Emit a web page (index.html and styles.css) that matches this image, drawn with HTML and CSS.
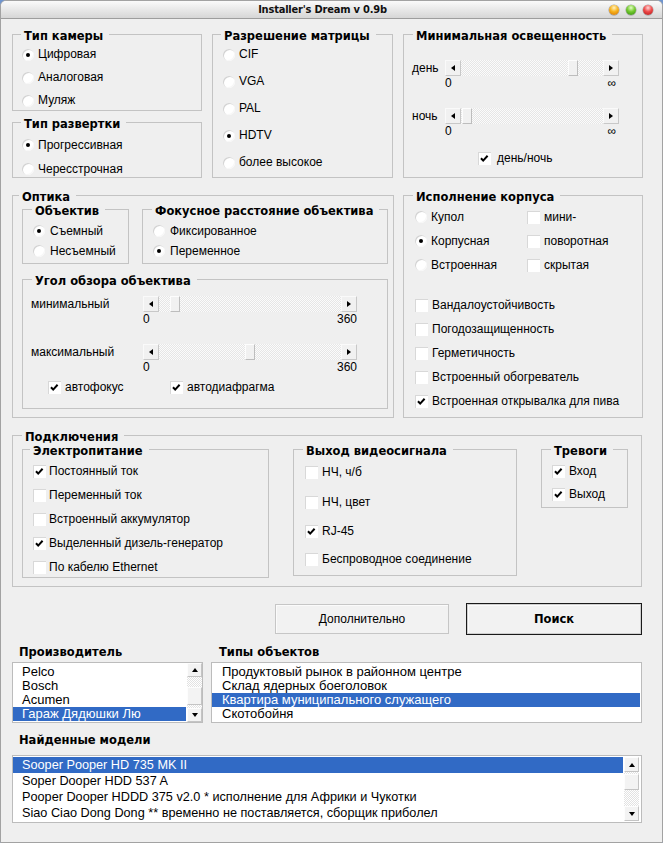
FILE: index.html
```html
<!DOCTYPE html>
<html lang="ru">
<head>
<meta charset="utf-8">
<title>Installer's Dream v 0.9b</title>
<link rel="stylesheet" href="styles.css">
</head>
<body>
<div class="window">
  <div class="titlebar">
    <div class="title">Installer's Dream v 0.9b</div>
    <div class="lights"><span class="lamp orange"></span><span class="lamp green"></span><span class="lamp red"></span></div>
  </div>
  <div class="content">
    <div class="row1">
      <div class="stack">
        <div class="group g-camtype">
          <div class="legend">Тип камеры</div>
          <div class="opt h23"><span class="radio on"></span>Цифровая</div>
          <div class="opt h23"><span class="radio"></span>Аналоговая</div>
          <div class="opt h23"><span class="radio"></span>Муляж</div>
        </div>
        <div class="group g-scan">
          <div class="legend">Тип развертки</div>
          <div class="items-scan">
            <div class="opt h24"><span class="radio on"></span>Прогрессивная</div>
            <div class="opt h24"><span class="radio"></span>Чересстрочная</div>
          </div>
        </div>
      </div>
      <div class="group g-res">
        <div class="legend">Разрешение матрицы</div>
        <div class="items-res">
          <div class="opt h27"><span class="radio"></span>CIF</div>
          <div class="opt h27"><span class="radio"></span>VGA</div>
          <div class="opt h27"><span class="radio"></span>PAL</div>
          <div class="opt h27"><span class="radio on"></span>HDTV</div>
          <div class="opt h27"><span class="radio"></span>более высокое</div>
        </div>
      </div>
      <div class="group g-light">
        <div class="legend">Минимальная освещенность</div>
        <div class="light-body">
          <div class="srow">
            <span class="slabel s-short">день</span>
            <div class="slider s-light"><span class="sbtn left"></span><div class="track"><span class="thumb" style="margin-left:107px"></span></div><span class="sbtn right"></span></div>
          </div>
          <div class="vals v-short v-light"><span>0</span><span>∞</span></div>
          <div class="srow gap-srow">
            <span class="slabel s-short">ночь</span>
            <div class="slider s-light"><span class="sbtn left"></span><div class="track"><span class="thumb" style="margin-left:1px"></span></div><span class="sbtn right"></span></div>
          </div>
          <div class="vals v-short v-light"><span>0</span><span>∞</span></div>
          <div class="opt dn"><span class="check on"><svg viewBox="0 0 13 13"><path d="M3 6.2 L5.2 8.6 L9.6 3.8"/></svg></span>день/ночь</div>
        </div>
      </div>
    </div>

    <div class="row2">
      <div class="group g-optics">
        <div class="legend">Оптика</div>
        <div class="lens-row">
          <div class="group g-lens">
            <div class="legend">Объектив</div>
            <div class="items-lens">
              <div class="opt h20 wide-gap"><span class="radio on"></span>Съемный</div>
              <div class="opt h20 wide-gap"><span class="radio"></span>Несъемный</div>
            </div>
          </div>
          <div class="group g-focal">
            <div class="legend">Фокусное расстояние объектива</div>
            <div class="items-lens">
              <div class="opt h20 wide-gap"><span class="radio"></span>Фиксированное</div>
              <div class="opt h20 wide-gap"><span class="radio on"></span>Переменное</div>
            </div>
          </div>
        </div>
        <div class="group g-angle">
          <div class="legend">Угол обзора объектива</div>
          <div class="angle-body">
            <div class="srow">
              <span class="slabel s-long">минимальный</span>
              <div class="slider s-angle"><span class="sbtn left"></span><div class="track"><span class="thumb" style="margin-left:11px"></span></div><span class="sbtn right"></span></div>
            </div>
            <div class="vals v-long v-angle"><span>0</span><span>360</span></div>
            <div class="srow gap-srow">
              <span class="slabel s-long">максимальный</span>
              <div class="slider s-angle"><span class="sbtn left"></span><div class="track"><span class="thumb" style="margin-left:86px"></span></div><span class="sbtn right"></span></div>
            </div>
            <div class="vals v-long v-angle"><span>0</span><span>360</span></div>
            <div class="angle-checks">
              <div class="opt h16 af"><span class="check on"><svg viewBox="0 0 13 13"><path d="M3 6.2 L5.2 8.6 L9.6 3.8"/></svg></span>автофокус</div>
              <div class="opt h16"><span class="check on"><svg viewBox="0 0 13 13"><path d="M3 6.2 L5.2 8.6 L9.6 3.8"/></svg></span>автодиафрагма</div>
            </div>
          </div>
        </div>
      </div>

      <div class="group g-body">
        <div class="legend">Исполнение корпуса</div>
        <div class="body-grid">
          <div class="opt h24"><span class="radio"></span>Купол</div>
          <div class="opt h24"><span class="check"></span>мини-</div>
          <div class="opt h24"><span class="radio on"></span>Корпусная</div>
          <div class="opt h24"><span class="check"></span>поворотная</div>
          <div class="opt h24"><span class="radio"></span>Встроенная</div>
          <div class="opt h24"><span class="check"></span>скрытая</div>
        </div>
        <div class="body-list">
          <div class="opt h24"><span class="check"></span>Вандалоустойчивость</div>
          <div class="opt h24"><span class="check"></span>Погодозащищенность</div>
          <div class="opt h24"><span class="check"></span>Герметичность</div>
          <div class="opt h24"><span class="check"></span>Встроенный обогреватель</div>
          <div class="opt h24"><span class="check on"><svg viewBox="0 0 13 13"><path d="M3 6.2 L5.2 8.6 L9.6 3.8"/></svg></span>Встроенная открывалка для пива</div>
        </div>
      </div>
    </div>

    <div class="group g-conn">
      <div class="legend">Подключения</div>
      <div class="conn-row">
        <div class="group g-power">
          <div class="legend">Электропитание</div>
          <div class="items-power">
            <div class="opt h24 tight"><span class="check on"><svg viewBox="0 0 13 13"><path d="M3 6.2 L5.2 8.6 L9.6 3.8"/></svg></span>Постоянный ток</div>
            <div class="opt h24 tight"><span class="check"></span>Переменный ток</div>
            <div class="opt h24 tight"><span class="check"></span>Встроенный аккумулятор</div>
            <div class="opt h24 tight"><span class="check on"><svg viewBox="0 0 13 13"><path d="M3 6.2 L5.2 8.6 L9.6 3.8"/></svg></span>Выделенный дизель-генератор</div>
            <div class="opt h24 tight"><span class="check"></span>По кабелю Ethernet</div>
          </div>
        </div>
        <div class="group g-video">
          <div class="legend">Выход видеосигнала</div>
          <div class="items-video">
            <div class="opt hv1"><span class="check"></span>НЧ, ч/б</div>
            <div class="opt hv2"><span class="check"></span>НЧ, цвет</div>
            <div class="opt hv3"><span class="check on"><svg viewBox="0 0 13 13"><path d="M3 6.2 L5.2 8.6 L9.6 3.8"/></svg></span>RJ-45</div>
            <div class="opt hv3"><span class="check"></span>Беспроводное соединение</div>
          </div>
        </div>
        <div class="group g-alarm">
          <div class="legend">Тревоги</div>
          <div class="items-alarm">
            <div class="opt h23"><span class="check on"><svg viewBox="0 0 13 13"><path d="M3 6.2 L5.2 8.6 L9.6 3.8"/></svg></span>Вход</div>
            <div class="opt h23"><span class="check on"><svg viewBox="0 0 13 13"><path d="M3 6.2 L5.2 8.6 L9.6 3.8"/></svg></span>Выход</div>
          </div>
        </div>
      </div>
    </div>

    <div class="buttons">
      <div class="btn">Дополнительно</div>
      <div class="btn default">Поиск</div>
    </div>

    <div class="lists-head">
      <div class="head h-manu">Производитель</div>
      <div class="head h-types">Типы объектов</div>
    </div>
    <div class="lists-row">
      <div class="list l-manu">
        <div class="list-items">
          <div class="li">Pelco</div>
          <div class="li">Bosch</div>
          <div class="li">Acumen</div>
          <div class="li sel">Гараж Дядюшки Лю</div>
        </div>
        <div class="sb sb-manu"><span class="sb-btn up"></span><span class="sb-thumb"></span><span class="sb-fill"></span><span class="sb-btn down"></span></div>
      </div>
      <div class="list l-types">
        <div class="list-items">
          <div class="li">Продуктовый рынок в районном центре</div>
          <div class="li">Склад ядерных боеголовок</div>
          <div class="li sel">Квартира муниципального служащего</div>
          <div class="li">Скотобойня</div>
        </div>
      </div>
    </div>

    <div class="head h-models">Найденные модели</div>
    <div class="list l-models">
      <div class="list-items">
        <div class="li sel">Sooper Pooper HD 735 MK II</div>
        <div class="li">Soper Dooper HDD 537 A</div>
        <div class="li">Pooper Dooper HDDD 375 v2.0 * исполнение для Африки и Чукотки</div>
        <div class="li">Siao Ciao Dong Dong ** временно не поставляется, сборщик приболел</div>
      </div>
      <div class="sb sb-models"><span class="sb-btn up"></span><span class="sb-thumb"></span><span class="sb-fill"></span><span class="sb-btn down"></span></div>
    </div>
  </div>
</div>
</body>
</html>
```
FILE: styles.css
```css
* { box-sizing: border-box; }
html, body { margin: 0; padding: 0; }
body {
  width: 663px;
  height: 843px;
  overflow: hidden;
  background: #6f95cf;
  font: 12px/1.2 "Liberation Sans", Arial, sans-serif;
  color: #000;
}

.window {
  width: 663px;
  height: 843px;
  background: #efefef;
  border: 1px solid #a2a2a2;
  border-radius: 6px 6px 0 0;
  overflow: hidden;
  display: flex;
  flex-direction: column;
}

/* ---------- title bar ---------- */
.titlebar {
  height: 18px;
  flex: none;
  display: flex;
  align-items: center;
  background: linear-gradient(#fafafa, #d6d6d6);
  border-bottom: 1px solid #9d9d9d;
}
.title {
  flex: 1;
  text-align: center;
  padding-left: 35px;
  font: bold 11px "DejaVu Sans Condensed", "DejaVu Sans", sans-serif;
  letter-spacing: -0.2px;
  color: #111;
}
.lights {
  display: flex;
  gap: 7px;
  padding-right: 9px;
}
.lamp {
  width: 10px;
  height: 10px;
  border-radius: 50%;
  box-shadow: 0 0 0 0.5px rgba(0,0,0,0.35);
}
.orange { background: radial-gradient(circle at 50% 28%, #fff2c0 0, #f7b21c 45%, #d26f00 100%); }
.green  { background: radial-gradient(circle at 50% 28%, #e4ffc4 0, #73c92f 45%, #2f8a0c 100%); }
.red    { background: radial-gradient(circle at 50% 28%, #ffd6d6 0, #ee4a4a 45%, #b01414 100%); }

/* ---------- content ---------- */
.content {
  flex: 1;
  padding: 15px 20px 0 11px;
}

.group {
  --pl: 0px;
  --lm: 8px;
  border: 1px solid #c3c3c3;
  padding-left: var(--pl);
}
.legend {
  width: max-content;
  height: 14px;
  line-height: 14px;
  margin: -6px 0 0 calc(var(--lm) - var(--pl));
  padding: 0 6px 0 3px;
  background: #efefef;
  font: bold 11.5px "DejaVu Sans", sans-serif;
}

.opt {
  display: flex;
  align-items: center;
  gap: 4px;
  white-space: nowrap;
}
.opt.wide-gap { gap: 5px; }
.opt.tight { gap: 3px; }
.h16 { height: 16px; }
.h20 { height: 20px; }
.h23 { height: 23px; }
.h24 { height: 24px; }
.h27 { height: 27px; }
.hv1 { height: 31px; }
.hv2 { height: 29px; }
.hv3 { height: 28px; }

.radio {
  flex: none;
  width: 12px;
  height: 12px;
  border-radius: 50%;
  background: #fff;
  box-shadow: inset 1px 1px 0 #d2d2d2, inset -1px -1px 0 #f7f7f7;
  display: flex;
  align-items: center;
  justify-content: center;
}
.radio.on::after {
  content: "";
  width: 4px;
  height: 4px;
  border-radius: 50%;
  background: #000;
}
.check {
  flex: none;
  width: 13px;
  height: 13px;
  background: #fff;
  box-shadow: inset 1px 1px 0 #d8d8d8;
  display: flex;
}
.check svg { width: 13px; height: 13px; }
.check path { fill: none; stroke: #000; stroke-width: 2; }

/* ---------- row 1 ---------- */
.row1 {
  display: grid;
  grid-template-columns: 190px 181px 240px;
  column-gap: 10px;
  align-items: start;
}
.g-camtype { height: 77px; --pl: 9px; }
.g-scan { height: 56px; margin-top: 11px; --pl: 9px; }
.items-scan { padding-top: 2px; }
.g-res { height: 144px; --pl: 10px; }
.items-res { margin-top: -2px; }
.g-light { height: 144px; --lm: 9px; }

.light-body { padding: 17px 0 0 8px; }
.srow { display: flex; align-items: center; height: 16px; }
.gap-srow { margin-top: 18px; }
.slabel { flex: none; }
.s-short { width: 33px; }
.s-long { width: 112px; }
.vals {
  display: flex;
  justify-content: space-between;
  height: 14px;
  line-height: 14px;
}
.v-short { margin-left: 33px; }
.v-light { width: 171px; }
.v-long { margin-left: 112px; }
.v-angle { width: 214px; }
.dn { height: 16px; margin-top: 12px; padding-left: 66px; gap: 6px; }

.slider { display: flex; height: 16px; }
.s-light { width: 174px; }
.s-angle { width: 214px; }
.sbtn {
  flex: none;
  width: 16px;
  height: 16px;
  background: #f1f1f1;
  border: 1px solid;
  border-color: #fafafa #c8c8c8 #c8c8c8 #fafafa;
  display: flex;
  align-items: center;
  justify-content: center;
}
.sbtn::before {
  content: "";
  width: 0;
  height: 0;
  border-top: 3.5px solid transparent;
  border-bottom: 3.5px solid transparent;
}
.sbtn.left::before { border-right: 4px solid #000; }
.sbtn.right::before { border-left: 4px solid #000; }
.track {
  flex: 1;
  display: flex;
  background: repeating-conic-gradient(#fbfbfb 0 25%, #e6e6e6 0 50%) 0 0 / 2px 2px;
}
.thumb {
  flex: none;
  width: 10px;
  height: 16px;
  background: #f1f1f1;
  border: 1px solid;
  border-color: #fdfdfd #bdbdbd #bdbdbd #fdfdfd;
}

/* ---------- row 2 ---------- */
.row2 {
  display: grid;
  grid-template-columns: 382px 240px;
  column-gap: 9px;
  align-items: start;
  margin-top: 17px;
}
.g-optics { height: 223px; --pl: 9px; --lm: 6px; padding-right: 5px; }
.lens-row { display: flex; gap: 13px; margin-top: 5px; }
.g-lens { width: 107px; height: 55px; --pl: 10px; --lm: 9px; }
.g-focal { width: 246px; height: 55px; --pl: 10px; --lm: 9px; }
.items-lens { padding-top: 3px; }
.g-angle { height: 130px; margin-top: 15px; --lm: 9px; }
.angle-body { padding: 8px 0 0 8px; }
.angle-checks { display: flex; margin-top: 5px; padding-left: 17px; }
.af { width: 122px; }

.g-body { height: 223px; --pl: 11px; --lm: 9px; }
.body-grid {
  display: grid;
  grid-template-columns: 112px 1fr;
  padding-top: 1px;
}
.body-list { margin-top: 16px; }

/* ---------- connections ---------- */
.g-conn { height: 152px; margin-top: 17px; --pl: 9px; --lm: 9px; }
.conn-row { display: flex; gap: 24px; align-items: flex-start; margin-top: 5px; }
.g-power { width: 247px; height: 129px; --pl: 10px; --lm: 7px; }
.items-power { padding-top: 1px; }
.g-video { width: 224px; height: 127px; --pl: 11px; --lm: 9px; }
.items-video { margin-top: -1px; }
.g-alarm { width: 87px; height: 59px; --pl: 10px; --lm: 9px; }
.items-alarm { padding-top: 2px; }

/* ---------- buttons ---------- */
.buttons {
  display: flex;
  justify-content: flex-end;
  align-items: center;
  gap: 17px;
  margin-top: 16px;
  height: 32px;
}
.btn {
  width: 174px;
  height: 30px;
  display: flex;
  align-items: center;
  justify-content: center;
  background: #f2f2f2;
  border: 1px solid #c6c6c6;
  box-shadow: inset 1px 1px 0 #fbfbfb;
}
.btn.default {
  width: 176px;
  height: 32px;
  border: 1px solid #1a1a1a;
  box-shadow: inset 0 0 0 1px #cfcfcf, inset 2px 2px 0 #fbfbfb;
  font: bold 11.5px "DejaVu Sans", sans-serif;
}

/* ---------- lists ---------- */
.lists-head {
  display: grid;
  grid-template-columns: 199px 1fr;
  margin-top: 10px;
}
.head {
  height: 14px;
  line-height: 14px;
  font: bold 11.5px "DejaVu Sans", sans-serif;
}
.h-manu { padding-left: 7px; }
.h-types { padding-left: 8px; }
.lists-row {
  display: grid;
  grid-template-columns: 191px 431px;
  column-gap: 8px;
  margin-top: 3px;
}
.list {
  display: flex;
  background: #fff;
  border: 1px solid #bcbcbc;
  overflow: hidden;
}
.list-items { flex: 1; min-width: 0; }
.li {
  white-space: nowrap;
  font: 13px "Liberation Sans", Arial, sans-serif;
}
.li.sel { background: #316ac5; color: #fff; }

.l-manu { height: 61px; }
.l-manu .list-items { padding-top: 2px; margin-right: 1px; }
.l-manu .li { height: 14px; line-height: 14px; padding-left: 9px; }
.l-types { height: 61px; }
.l-types .list-items { padding-top: 2px; margin-right: 1px; }
.l-types .li { height: 14px; line-height: 14px; padding-left: 10px; }

.h-models { margin-top: 10px; padding-left: 7px; }
.l-models { height: 68px; width: 630px; margin-top: 8px; }
.l-models .list-items { padding-top: 1px; margin-right: 1px; }
.l-models .li { height: 16px; line-height: 16px; padding-left: 9px; font-size: 12.7px; }

.sb {
  flex: none;
  width: 15px;
  display: flex;
  flex-direction: column;
  background: repeating-conic-gradient(#ffffff 0 25%, #e2e2e2 0 50%) 0 0 / 2px 2px;
}
.sb-models { margin: 1px 2px 1px 0; }
.sb-btn {
  flex: none;
  height: 15px;
  background: #f3f3f3;
  border: 1px solid;
  border-color: #fdfdfd #c4c4c4 #c4c4c4 #fdfdfd;
  display: flex;
  align-items: center;
  justify-content: center;
}
.sb-manu .sb-btn { height: 14px; }
.sb-btn::before {
  content: "";
  width: 0;
  height: 0;
  border-left: 3.5px solid transparent;
  border-right: 3.5px solid transparent;
}
.sb-btn.up::before { border-bottom: 4px solid #000; }
.sb-btn.down::before { border-top: 4px solid #000; }
.sb-thumb {
  flex: none;
  background: #f3f3f3;
  border: 1px solid;
  border-color: #fdfdfd #c4c4c4 #c4c4c4 #fdfdfd;
}
.sb-manu .sb-thumb { height: 18px; margin-top: 10px; }
.sb-models .sb-thumb { height: 16px; margin-top: 2px; }
.sb-fill { flex: 1; }
```
